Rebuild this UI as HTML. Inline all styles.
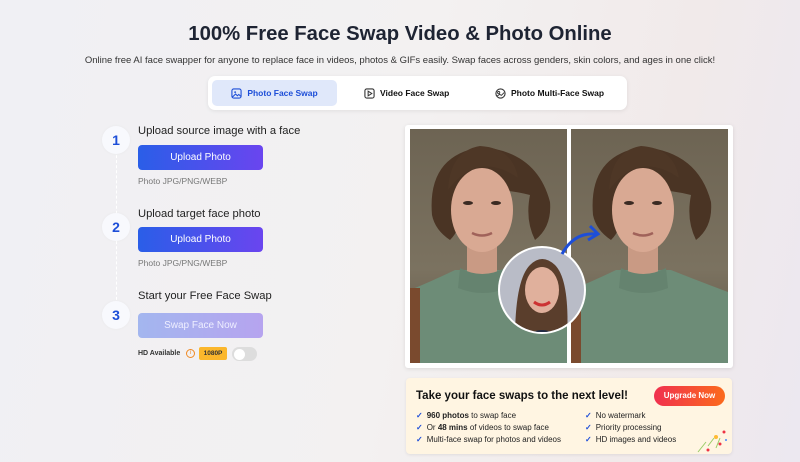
<!DOCTYPE html>
<html><head><meta charset="utf-8"><style>
*{margin:0;padding:0;box-sizing:border-box}
body{width:800px;height:462px;overflow:hidden;font-family:"Liberation Sans",Arial,sans-serif;background:linear-gradient(100deg,#f0f0f4 0%,#f3f1f1 50%,#f1eaea 80%,#ece8f0 100%);position:relative;color:#1f2937}
.a{position:absolute}
h1{position:absolute;top:23px;left:0;width:800px;text-align:center;font-size:20.3px;font-weight:bold;color:#1e2433}
.sub{top:55px;left:0;width:800px;text-align:center;font-size:9.5px;color:#333}
.tabs{left:208px;top:76px;width:419px;height:34px;background:#fff;border-radius:7px;box-shadow:0 1px 4px rgba(0,0,0,.08)}
.tab{position:absolute;top:4px;height:26px;font-size:8.5px;font-weight:bold;display:flex;align-items:center;gap:5px;color:#111}
.num{width:28px;height:28px;border-radius:50%;background:#f8f9fd;box-shadow:0 0 3px rgba(0,0,0,.04);color:#1d4ed8;font-weight:bold;font-size:14px;display:flex;align-items:center;justify-content:center}
.st{font-size:11.2px;color:#222}
.btn{width:125px;height:25px;border-radius:4px;background:linear-gradient(90deg,#2a5ee8,#6a45ef);color:#fff;font-size:10px;display:flex;align-items:center;justify-content:center}
.fmt{font-size:8.5px;color:#777}
.promo{left:406px;top:378px;width:326px;height:76px;background:#fff5e2;border-radius:4px;box-shadow:0 1px 3px rgba(0,0,0,.08)}
.li{font-size:8px;color:#222;position:absolute}
.li:before{content:"✓";color:#1d4ed8;font-weight:bold;margin-right:4px}
</style></head><body>
<h1>100% Free Face Swap Video &amp; Photo Online</h1>
<div class="a sub">Online free AI face swapper for anyone to replace face in videos, photos &amp; GIFs easily. Swap faces across genders, skin colors, and ages in one click!</div>
<div class="a tabs">
 <div class="tab" style="left:4px;width:125px;background:#e0e8fa;border-radius:5px;justify-content:center;color:#1d4ed8"><svg width="11" height="11" viewBox="0 0 12 12"><rect x="1" y="1" width="10" height="10" rx="2" fill="none" stroke="#1d4ed8" stroke-width="1.2"/><circle cx="4.5" cy="4.5" r="1" fill="#1d4ed8"/><path d="M1.5 10l3.5-3.5 2 2 1.5-1.5 2 2" fill="none" stroke="#1d4ed8" stroke-width="1.1"/></svg>Photo Face Swap</div>
 <div class="tab" style="left:156px"><svg width="11" height="11" viewBox="0 0 12 12"><rect x="1" y="1" width="10" height="10" rx="2" fill="none" stroke="#333" stroke-width="1.2"/><path d="M4.5 3.5v5l4-2.5z" fill="none" stroke="#333" stroke-width="1.1"/></svg>Video Face Swap</div>
 <div class="tab" style="left:287px"><svg width="11" height="11" viewBox="0 0 12 12"><circle cx="6" cy="6" r="5" fill="none" stroke="#333" stroke-width="1.2"/><circle cx="4" cy="5" r="1.2" fill="none" stroke="#333"/><path d="M2 9l3-2 2 1 3-3" fill="none" stroke="#333"/></svg>Photo Multi-Face Swap</div>
</div>
<div class="a" style="left:116px;top:150px;height:165px;border-left:1.5px dashed #fff;"></div>
<div class="a num" style="left:102px;top:126px">1</div>
<div class="a num" style="left:102px;top:213px">2</div>
<div class="a num" style="left:102px;top:301px">3</div>
<div class="a st" style="left:138px;top:125px">Upload source image with a face</div>
<div class="a btn" style="left:138px;top:145px">Upload Photo</div>
<div class="a fmt" style="left:138px;top:176px">Photo JPG/PNG/WEBP</div>
<div class="a st" style="left:138px;top:208px">Upload target face photo</div>
<div class="a btn" style="left:138px;top:227px">Upload Photo</div>
<div class="a fmt" style="left:138px;top:258px">Photo JPG/PNG/WEBP</div>
<div class="a st" style="left:138px;top:290px">Start your Free Face Swap</div>
<div class="a btn" style="left:138px;top:313px;background:linear-gradient(90deg,#a3b6ef,#b6a4ef);color:#eef">Swap Face Now</div>
<div class="a" style="left:138px;top:350px;font-size:7px;font-weight:bold;color:#333">HD Available</div>
<div class="a" style="left:186px;top:349px;width:9px;height:9px;border:1px solid #f08a24;border-radius:50%;font-size:6px;color:#f08a24;text-align:center;line-height:7px">i</div>
<div class="a" style="left:199px;top:347px;width:28px;height:13px;background:#fbb72c;border-radius:2px;font-size:6.5px;font-weight:bold;text-align:center;line-height:13px;color:#333">1080P</div>
<div class="a" style="left:232px;top:347px;width:25px;height:14px;background:#ddd;border-radius:7px"><div style="position:absolute;left:1.5px;top:1.5px;width:11px;height:11px;background:#fff;border-radius:50%"></div></div>

<div class="a" style="left:405px;top:125px;width:328px;height:243px;background:#fff;border-radius:3px;box-shadow:0 1px 4px rgba(0,0,0,.1)"></div>
<svg class="a" style="left:0;top:0" width="800" height="462">
<defs>
<linearGradient id="bg" x1="0" y1="0" x2="0" y2="1"><stop offset="0" stop-color="#6d6453"/><stop offset=".6" stop-color="#7b7260"/><stop offset="1" stop-color="#5e5444"/></linearGradient>
<clipPath id="c1"><rect x="410" y="129" width="157" height="234"/></clipPath>
<clipPath id="c2"><rect x="571" y="129" width="157" height="234"/></clipPath>
<clipPath id="cc"><circle cx="542" cy="290" r="42"/></clipPath>
<g id="p">
<rect x="410" y="129" width="157" height="234" fill="url(#bg)"/>
<path d="M410 290 q20-8 45-20 l55 0 q25 10 57 22 v71 h-157z" fill="#6d8c77"/>
<path d="M410 288 h10 v75 h-10z" fill="#7a4a2e"/>
<rect x="467" y="240" width="30" height="35" fill="#c99a84"/>
<path d="M460 268 q22 12 45 0 l2 20 q-24 10-49 0z" fill="#65836f"/>
<path d="M432 215 q-5-60 50-68 q55 5 68 55 q2 25-15 38 q-10-20-5-45 q-40-10-70 0 q5 30-10 45 q-15-10-18-25z" fill="#4a3424"/>
<ellipse cx="482" cy="210" rx="31" ry="42" fill="#d9a993"/>
<path d="M448 190 q30-40 70-12 q-5-30-38-32 q-30 5-32 44z" fill="#4e3726"/>
<ellipse cx="468" cy="203" rx="5" ry="2" fill="#3a2a22"/><ellipse cx="496" cy="203" rx="5" ry="2" fill="#3a2a22"/>
<path d="M472 233 q10 5 20 0" stroke="#a0625a" stroke-width="2.5" fill="none"/>
</g>
</defs>
<g clip-path="url(#c1)"><use href="#p"/></g>
<g clip-path="url(#c2)"><use href="#p" transform="translate(161 0)"/></g>
<circle cx="542" cy="290" r="44" fill="#fff"/>
<g clip-path="url(#cc)">
<rect x="498" y="246" width="88" height="88" fill="#b9bcc7"/>
<path d="M515 340 q0-60 15-75 q12-12 25 0 q15 15 12 75z" fill="#5a3e2c"/>
<ellipse cx="542" cy="290" rx="17" ry="23" fill="#e0b09c"/>
<path d="M522 340 q20-20 40 0z" fill="#1f2a44"/>
<path d="M534 302 q8 6 16 0" stroke="#c33" stroke-width="3" fill="none"/>
</g>
<path d="M562 254 q12-22 34-20" stroke="#1d4ed8" stroke-width="3" fill="none"/>
<path d="M590 226 l8 8 -10 6" stroke="#1d4ed8" stroke-width="3" fill="none"/>
</svg>

<div class="a promo">
 <div class="a" style="left:10px;top:12px;font-size:11.5px;font-weight:bold;color:#111">Take your face swaps to the next level!</div>
 <div class="a" style="left:248px;top:8px;width:71px;height:20px;border-radius:10px;background:linear-gradient(90deg,#f0304f,#fb6a1c);color:#fff;font-size:8px;font-weight:bold;text-align:center;line-height:20px">Upgrade Now</div>
 <div class="li" style="left:10px;top:33px"><b>960 photos</b> to swap face</div>
 <div class="li" style="left:10px;top:45px">Or <b>48 mins</b> of videos to swap face</div>
 <div class="li" style="left:10px;top:57px">Multi-face swap for photos and videos</div>
 <div class="li" style="left:179px;top:33px">No watermark</div>
 <div class="li" style="left:179px;top:45px">Priority processing</div>
 <div class="li" style="left:179px;top:57px">HD images and videos</div>
 <svg class="a" style="left:290px;top:50px" width="34" height="26"><path d="M2 24l8-10M12 18l6-8M20 20l4-10" stroke="#9c6" stroke-width="1"/><circle cx="28" cy="4" r="1.5" fill="#e34"/><circle cx="12" cy="22" r="1.5" fill="#e34"/><circle cx="24" cy="16" r="1.5" fill="#e34"/><circle cx="20" cy="9" r="2" fill="#fb3"/><circle cx="30" cy="12" r="1" fill="#48f"/></svg>
</div>
</body></html>
